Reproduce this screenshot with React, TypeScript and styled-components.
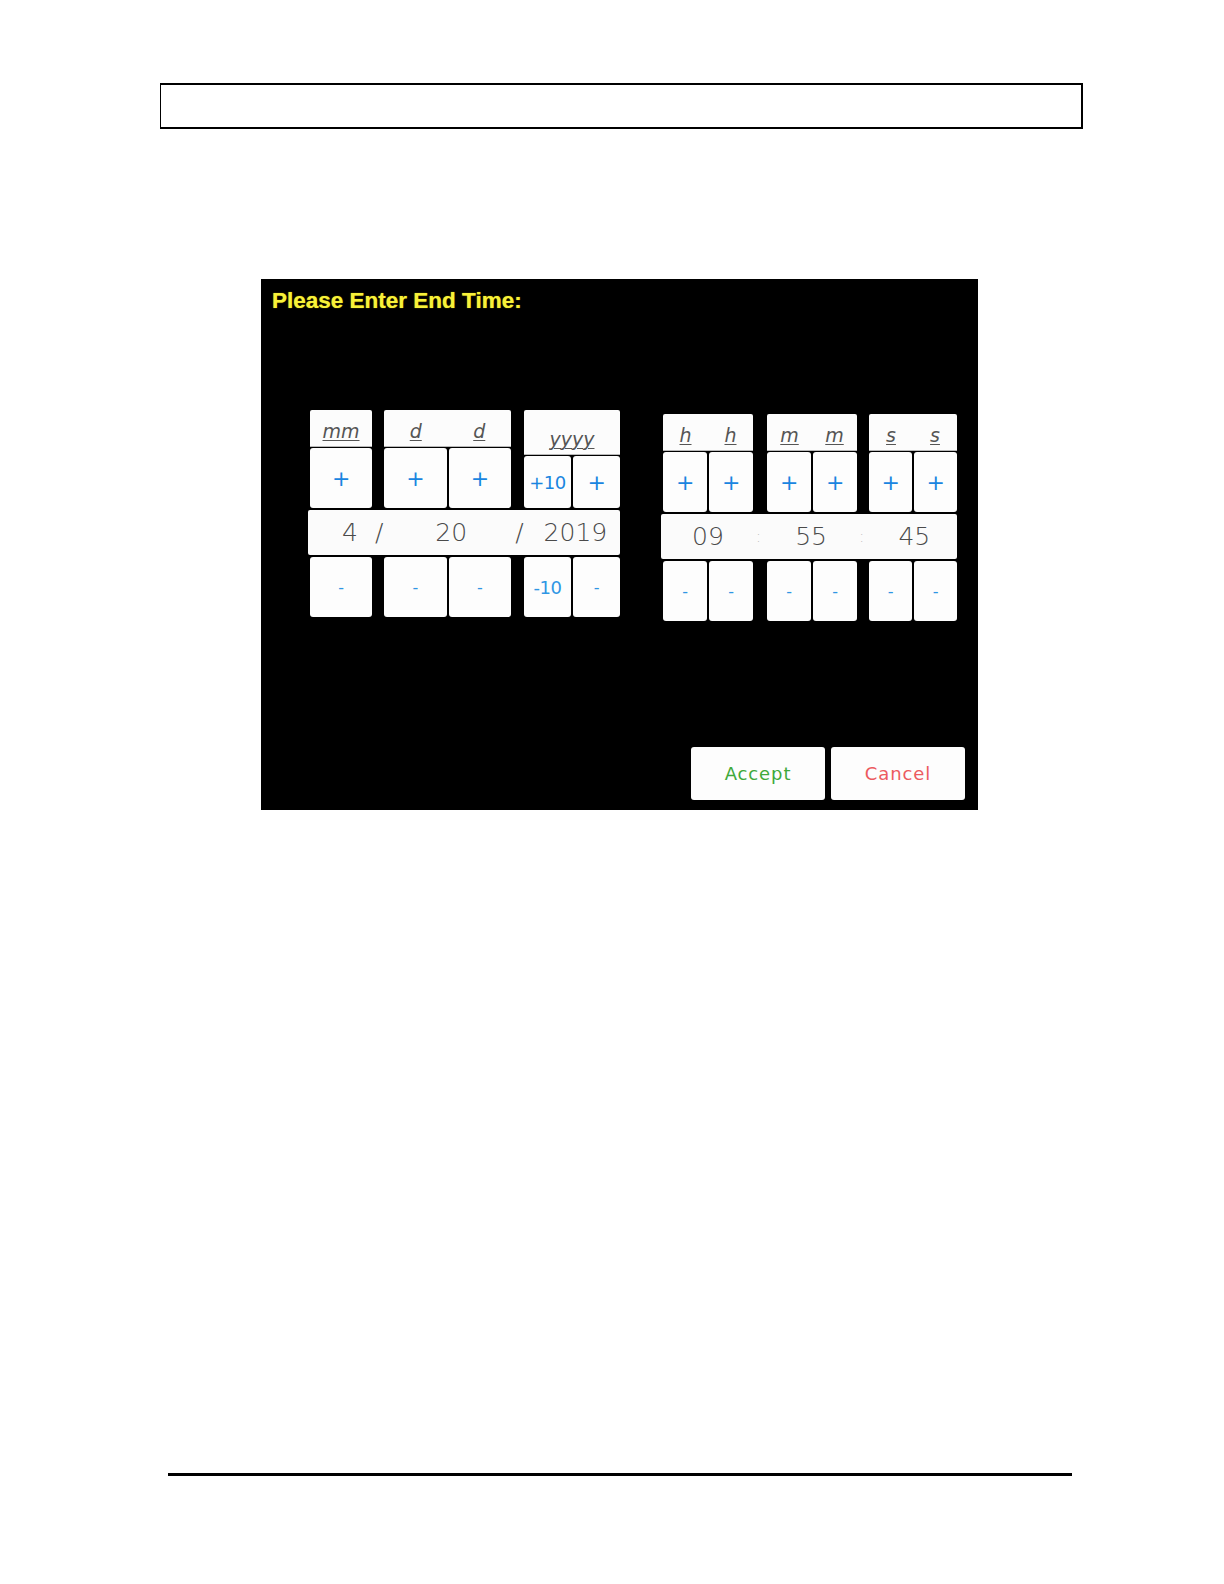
import styled, { createGlobalStyle } from "styled-components";

const GlobalStyle = createGlobalStyle`
  html, body {
    margin: 0;
    padding: 0;
    background: #fff;
    overflow: hidden;
    font-family: "Liberation Sans", Arial, sans-serif;
  }
`;

type Unit = {
  labels: string[];
  width: number;
  headerH: number;
  buttons: { plus: string; minus: string }[];
};

type Segment = { text: string; ml: number; faint?: boolean };

const dateUnits: Unit[] = [
  { labels: ["mm"], width: 62, headerH: 37, buttons: [{ plus: "+", minus: "-" }] },
  {
    labels: ["d", "d"],
    width: 127,
    headerH: 37,
    buttons: [
      { plus: "+", minus: "-" },
      { plus: "+", minus: "-" },
    ],
  },
  {
    labels: ["yyyy"],
    width: 96,
    headerH: 45,
    buttons: [
      { plus: "+10", minus: "-10" },
      { plus: "+", minus: "-" },
    ],
  },
];

const timeUnits: Unit[] = ["h", "m", "s"].map((l, i) => ({
  labels: [l, l],
  width: i === 2 ? 88 : 90,
  headerH: 37,
  buttons: [
    { plus: "+", minus: "-" },
    { plus: "+", minus: "-" },
  ],
}));

const dateText: Segment[] = [
  { text: "4", ml: 34 },
  { text: "/", ml: 17 },
  { text: "20", ml: 52 },
  { text: "/", ml: 48 },
  { text: "2019", ml: 20 },
];

const timeText: Segment[] = [
  { text: "09", ml: 31 },
  { text: ":", ml: 32, faint: true },
  { text: "55", ml: 34 },
  { text: ":", ml: 32, faint: true },
  { text: "45", ml: 34 },
];

function Picker({
  units,
  segments,
  gaps,
  offset,
}: {
  units: Unit[];
  segments: Segment[];
  gaps: number[];
  offset: number;
}) {
  return (
    <Group $offset={offset}>
      <UnitRow>
        {units.map((u, i) => (
          <UnitCol key={i} $w={u.width} $ml={i === 0 ? 0 : gaps[i - 1]}>
            <Header $h={u.headerH}>
              {u.labels.map((l, j) => (
                <Label key={j}>{l}</Label>
              ))}
            </Header>
            <ButtonRow>
              {u.buttons.map((b, j) => (
                <StepButton key={j} $h={98 - u.headerH - 1} $kind="plus" $small={b.plus.length > 1}>
                  {b.plus}
                </StepButton>
              ))}
            </ButtonRow>
          </UnitCol>
        ))}
      </UnitRow>
      <Display>
        {segments.map((s, i) => (
          <Digits key={i} $ml={s.ml} $faint={s.faint}>
            {s.text}
          </Digits>
        ))}
      </Display>
      <UnitRow>
        {units.map((u, i) => (
          <UnitCol key={i} $w={u.width} $ml={i === 0 ? 0 : gaps[i - 1]}>
            <ButtonRow>
              {u.buttons.map((b, j) => (
                <StepButton key={j} $h={60} $kind="minus" $small={b.minus.length > 1}>
                  {b.minus}
                </StepButton>
              ))}
            </ButtonRow>
          </UnitCol>
        ))}
      </UnitRow>
    </Group>
  );
}

export default function App() {
  return (
    <>
      <GlobalStyle />
      <Page>
        <TopBox />
        <Screen>
          <Title>Please Enter End Time:</Title>
          <Pickers>
            <Picker units={dateUnits} segments={dateText} gaps={[12, 13]} offset={0} />
            <Picker units={timeUnits} segments={timeText} gaps={[14, 12]} offset={4} />
          </Pickers>
          <Actions>
            <ActionButton $color="#3fa93a">Accept</ActionButton>
            <ActionButton $color="#ec5a5f">Cancel</ActionButton>
          </Actions>
        </Screen>
        <FooterRule />
      </Page>
    </>
  );
}

const Page = styled.div`
  width: 100%;
  height: 1584px;
  padding-top: 83px;
  box-sizing: border-box;
  display: flex;
  flex-direction: column;
  background: #fff;
  overflow: hidden;
`;

const TopBox = styled.div`
  margin-left: 160px;
  width: 923px;
  height: 46px;
  flex-shrink: 0;
  box-sizing: border-box;
  border: 2px solid #000;
  border-left-width: 1px;
`;

const Screen = styled.div`
  margin-top: 150px;
  margin-left: 261px;
  width: 717px;
  height: 531px;
  flex-shrink: 0;
  box-sizing: border-box;
  background: #000;
  padding: 8px 13px 10px 11px;
  display: flex;
  flex-direction: column;
`;

const Title = styled.div`
  color: #f7f13a;
  font-family: "Liberation Sans", Arial, sans-serif;
  font-weight: 700;
  font-size: 22.5px;
  line-height: 28px;
  text-shadow: 0 0 1px #c9b400;
`;

const Pickers = styled.div`
  margin-top: 95px;
  margin-left: 38px;
  display: flex;
  align-items: flex-start;
  gap: 43px;
`;

const Group = styled.div<{ $offset: number }>`
  margin-top: ${(p) => p.$offset}px;
  display: flex;
  flex-direction: column;
  gap: 2px;
`;

const UnitRow = styled.div`
  display: flex;
`;

const UnitCol = styled.div<{ $w: number; $ml: number }>`
  width: ${(p) => p.$w}px;
  margin-left: ${(p) => p.$ml}px;
  display: flex;
  flex-direction: column;
  gap: 1px;
`;

const Header = styled.div<{ $h: number }>`
  height: ${(p) => p.$h}px;
  background: #fcfcfc;
  border-radius: 2px 2px 0 0;
  border-bottom: 1px solid #b8b8b8;
  box-sizing: border-box;
  display: flex;
  align-items: flex-end;
  padding-bottom: 4px;
`;

const Label = styled.span`
  flex: 1;
  text-align: center;
  font-family: "DejaVu Sans", sans-serif;
  font-weight: 200;
  font-style: italic;
  font-size: 19px;
  line-height: 22px;
  color: #555;
  text-decoration: underline;
  text-decoration-thickness: 1px;
  text-underline-offset: 2px;
`;

const ButtonRow = styled.div`
  display: flex;
  gap: 2px;
`;

const StepButton = styled.div<{ $h: number; $kind: "plus" | "minus"; $small: boolean }>`
  flex: 1;
  height: ${(p) => p.$h}px;
  background: #fdfdfd;
  border-radius: 3px;
  display: flex;
  align-items: center;
  justify-content: center;
  font-family: "DejaVu Sans", sans-serif;
  font-weight: 400;
  color: ${(p) => (p.$kind === "plus" ? "#1985e0" : "#2f96e4")};
  font-size: ${(p) => (p.$small ? "18px" : p.$kind === "plus" ? "22px" : "16px")};
  letter-spacing: -0.5px;
`;

const Display = styled.div`
  height: 45px;
  margin-left: -2px;
  background: #fbfbfb;
  border-radius: 2px;
  display: flex;
  align-items: center;
`;

const Digits = styled.span<{ $ml: number; $faint?: boolean }>`
  margin-left: ${(p) => p.$ml}px;
  font-family: "DejaVu Sans", sans-serif;
  font-weight: 200;
  font-size: ${(p) => (p.$faint ? "16px" : "25px")};
  color: ${(p) => (p.$faint ? "#bbb" : "#4a4a4a")};
`;

const Actions = styled.div`
  margin-top: auto;
  display: flex;
  justify-content: flex-end;
  gap: 6px;
`;

const ActionButton = styled.div<{ $color: string }>`
  width: 134px;
  height: 53px;
  background: #fdfdfd;
  border-radius: 3px;
  display: flex;
  align-items: center;
  justify-content: center;
  font-family: "DejaVu Sans", sans-serif;
  font-size: 18px;
  letter-spacing: 0.9px;
  color: ${(p) => p.$color};
`;

const FooterRule = styled.div`
  margin-top: auto;
  margin-bottom: 108px;
  margin-left: 168px;
  width: 904px;
  height: 3px;
  flex-shrink: 0;
  background: #000;
`;
